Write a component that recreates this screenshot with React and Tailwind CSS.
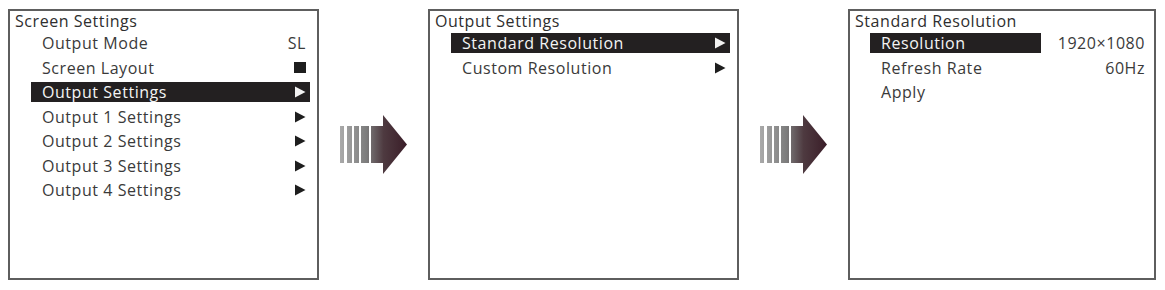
import React from 'react';

const font = { fontFamily: '"Open Sans", "Noto Sans", sans-serif', letterSpacing: '0.55px' };

const Tri = ({ light }) => (
  <svg width="12" height="12" viewBox="0 0 12 12" className="shrink-0">
    <polygon points="1,0.5 11.5,6 1,11.5" fill={light ? '#f2f2f2' : '#1e1e1e'} />
  </svg>
);

const Square = () => <span className="block w-[12px] h-[11px] bg-[#1e1e1e]" />;

const Row = ({ label, right, active }) => (
  <div className="ml-[21px] mr-[7px] h-[24.5px] flex items-center">
    <div
      className={`flex-1 h-[20px] flex items-center justify-between pl-[11px] pr-[4px] ${active ? 'bg-[#232021] text-[#f4f4f4]' : 'text-[#3a3a3a]'}`}
    >
      <span>{label}</span>
      {right}
    </div>
  </div>
);

const Panel = ({ title, children }) => (
  <div className="w-[311px] h-[271px] border-2 border-[#5e5e5e] bg-white shrink-0 text-[16px] leading-[20px]" style={font}>
    <div className="h-[20px] pl-[5px] text-[#2e2e2e]">{title}</div>
    {children}
  </div>
);

const BigArrow = ({ id }) => (
  <div className="w-[109px] shrink-0 flex items-center justify-center">
    <svg width="67" height="60" viewBox="0 0 67 60">
      <defs>
        <linearGradient id={id} gradientUnits="userSpaceOnUse" x1="0" y1="0" x2="67" y2="0">
          <stop offset="0" stopColor="#aaaaaa" />
          <stop offset="0.4" stopColor="#7c7c7c" />
          <stop offset="0.65" stopColor="#4e3a40" />
          <stop offset="1" stopColor="#3a1d28" />
        </linearGradient>
      </defs>
      <g fill={`url(#${id})`}>
        <rect x="0" y="11" width="4" height="37" />
        <rect x="7" y="11" width="5" height="37" />
        <rect x="14" y="11" width="5" height="37" />
        <rect x="21" y="11" width="8" height="37" />
        <rect x="31" y="11" width="14" height="37" />
        <polygon points="43,0 67,29.5 43,59" />
      </g>
    </svg>
  </div>
);

export default function App() {
  return (
    <div className="w-[1165px] h-[290px] bg-white flex items-start pt-[9px] pl-[8px]">
      <Panel title="Screen Settings">
        <Row label="Output Mode" right={<span>SL</span>} />
        <Row label="Screen Layout" right={<Square />} />
        <Row label="Output Settings" right={<Tri light />} active />
        <Row label="Output 1 Settings" right={<Tri />} />
        <Row label="Output 2 Settings" right={<Tri />} />
        <Row label="Output 3 Settings" right={<Tri />} />
        <Row label="Output 4 Settings" right={<Tri />} />
      </Panel>
      <div className="h-[271px] flex items-center">
        <BigArrow id="g1" />
      </div>
      <Panel title="Output Settings">
        <Row label="Standard Resolution" right={<Tri light />} active />
        <Row label="Custom Resolution" right={<Tri />} />
      </Panel>
      <div className="h-[271px] flex items-center">
        <BigArrow id="g2" />
      </div>
      <div className="w-[308px] h-[271px] border-2 border-[#5e5e5e] bg-white shrink-0 text-[16px] leading-[20px]" style={font}>
        <div className="h-[20px] pl-[5px] text-[#2e2e2e]">Standard Resolution</div>
        {[
          ['Resolution', '1920×1080', true],
          ['Refresh Rate', '60Hz', false],
          ['Apply', '', false],
        ].map(([label, value, active]) => (
          <div key={label} className="ml-[20px] h-[24.5px] flex items-center">
            <div className={`w-[171px] h-[20px] pl-[11px] ${active ? 'bg-[#232021] text-[#f4f4f4]' : 'text-[#3a3a3a]'}`}>
              {label}
            </div>
            <div className="flex-1 text-right pr-[9px] text-[#3a3a3a]">{value}</div>
          </div>
        ))}
      </div>
    </div>
  );
}
